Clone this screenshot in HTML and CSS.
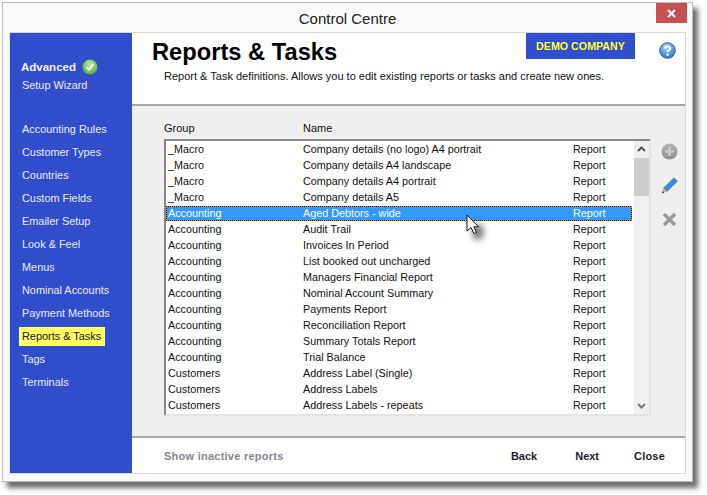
FILE: index.html
```html
<!DOCTYPE html>
<html lang="en">
<head>
<meta charset="utf-8">
<title>Control Centre</title>
<link rel="stylesheet" href="styles.css">
</head>
<body>
<div class="window">
  <div class="titlebar">
    <div class="title">Control Centre</div>
    <div class="close-x"><svg width="11" height="11" viewBox="0 0 11 11"><path d="M2 2L9 9M9 2L2 9" stroke="#fff" stroke-width="2" fill="none"/></svg></div>
  </div>
  <div class="frame">
    <nav class="sidebar">
      <div class="adv"><b>Advanced</b><svg class="tick" width="16" height="16" viewBox="0 0 16 16"><defs><radialGradient id="g" cx="50%" cy="35%" r="65%"><stop offset="0" stop-color="#c4eda2"/><stop offset="1" stop-color="#4fae3c"/></radialGradient></defs><circle cx="8" cy="8" r="7.5" fill="url(#g)"/><path d="M4.5 8.2L7 10.8L11.5 5" stroke="#fff" stroke-width="1.8" fill="none"/></svg></div>
      <div class="nav wizard">Setup Wizard</div>
      <div class="navlist">
        <div class="nav">Accounting Rules</div>
        <div class="nav">Customer Types</div>
        <div class="nav">Countries</div>
        <div class="nav">Custom Fields</div>
        <div class="nav">Emailer Setup</div>
        <div class="nav">Look &amp; Feel</div>
        <div class="nav">Menus</div>
        <div class="nav">Nominal Accounts</div>
        <div class="nav">Payment Methods</div>
        <div class="nav active">Reports &amp; Tasks</div>
        <div class="nav">Tags</div>
        <div class="nav">Terminals</div>
      </div>
    </nav>
    <main class="main">
      <header class="head">
        <div class="head-text">
          <h1>Reports &amp; Tasks</h1>
          <p>Report &amp; Task definitions. Allows you to edit existing reports or tasks and create new ones.</p>
        </div>
        <div class="demo">DEMO COMPANY</div>
        <svg class="help" width="17" height="17" viewBox="0 0 17 17"><defs><radialGradient id="h" cx="45%" cy="30%" r="75%"><stop offset="0" stop-color="#a9d6f5"/><stop offset="1" stop-color="#2472c0"/></radialGradient></defs><circle cx="8.5" cy="8.5" r="7.8" fill="url(#h)" stroke="#2a5f9f"/><path d="M5.8 6.4C5.8 3.8 11.2 3.8 11.2 6.4C11.2 8.2 8.6 8.2 8.6 10.2" stroke="#fff" stroke-width="2" fill="none"/><rect x="7.5" y="11.5" width="2.2" height="2.2" fill="#fff"/></svg>
      </header>
      <section class="body">
        <div class="cols"><span class="h1col">Group</span><span>Name</span></div>
        <div class="listrow">
          <div class="list">
            <div class="rows">
              <div class="row"><span class="c1">_Macro</span><span class="c2">Company details (no logo) A4 portrait</span><span>Report</span></div>
              <div class="row"><span class="c1">_Macro</span><span class="c2">Company details A4 landscape</span><span>Report</span></div>
              <div class="row"><span class="c1">_Macro</span><span class="c2">Company details A4 portrait</span><span>Report</span></div>
              <div class="row"><span class="c1">_Macro</span><span class="c2">Company details A5</span><span>Report</span></div>
              <div class="row sel"><span class="c1">Accounting</span><span class="c2">Aged Debtors - wide</span><span>Report</span></div>
              <div class="row"><span class="c1">Accounting</span><span class="c2">Audit Trail</span><span>Report</span></div>
              <div class="row"><span class="c1">Accounting</span><span class="c2">Invoices In Period</span><span>Report</span></div>
              <div class="row"><span class="c1">Accounting</span><span class="c2">List booked out uncharged</span><span>Report</span></div>
              <div class="row"><span class="c1">Accounting</span><span class="c2">Managers Financial Report</span><span>Report</span></div>
              <div class="row"><span class="c1">Accounting</span><span class="c2">Nominal Account Summary</span><span>Report</span></div>
              <div class="row"><span class="c1">Accounting</span><span class="c2">Payments Report</span><span>Report</span></div>
              <div class="row"><span class="c1">Accounting</span><span class="c2">Reconciliation Report</span><span>Report</span></div>
              <div class="row"><span class="c1">Accounting</span><span class="c2">Summary Totals Report</span><span>Report</span></div>
              <div class="row"><span class="c1">Accounting</span><span class="c2">Trial Balance</span><span>Report</span></div>
              <div class="row"><span class="c1">Customers</span><span class="c2">Address Label (Single)</span><span>Report</span></div>
              <div class="row"><span class="c1">Customers</span><span class="c2">Address Labels</span><span>Report</span></div>
              <div class="row"><span class="c1">Customers</span><span class="c2">Address Labels - repeats</span><span>Report</span></div>
            </div>
            <div class="scroll">
              <svg class="arrow" width="15" height="17" viewBox="0 0 15 17"><path d="M4 10L7.5 6.5L11 10" stroke="#555" stroke-width="2" fill="none"/></svg>
              <div class="thumb"></div>
              <div class="track"></div>
              <svg class="arrow" width="15" height="17" viewBox="0 0 15 17"><path d="M4 7L7.5 10.5L11 7" stroke="#777" stroke-width="2" fill="none"/></svg>
            </div>
          </div>
          <div class="tools">
            <svg width="17" height="17" viewBox="0 0 17 17"><defs><linearGradient id="p" x1="0" y1="0" x2="0" y2="1"><stop offset="0" stop-color="#b4b4b4"/><stop offset="1" stop-color="#8e8e8e"/></linearGradient></defs><circle cx="8.5" cy="8.5" r="8" fill="url(#p)"/><path d="M8.5 4V13M4 8.5H13" stroke="#c9c9c9" stroke-width="2.6"/></svg>
            <svg width="17" height="17" viewBox="0 0 17 17"><path d="M13 .8L16.4 4.2L6 14.4L2.4 11.2Z" fill="#3a8fd8" stroke="#2a6cb0" stroke-width=".6"/><path d="M2.4 11.2L6 14.4L.8 16.4Z" fill="#e8b060"/><path d="M.8 16.4L1.8 14L3.2 15.4Z" fill="#333"/></svg>
            <svg width="17" height="17" viewBox="0 0 17 17"><path d="M3 3L14 14M14 3L3 14" stroke="#9a9a9a" stroke-width="3.6"/></svg>
          </div>
        </div>
      </section>
      <footer class="foot">
        <span class="inactive">Show inactive reports</span>
        <span class="btn back">Back</span>
        <span class="btn next">Next</span>
        <span class="btn">Close</span>
      </footer>
    </main>
  </div>
  <svg class="cursor" width="14" height="22" viewBox="0 0 14 22"><defs><filter id="b" x="-100%" y="-100%" width="300%" height="300%"><feGaussianBlur stdDeviation="3"/></filter></defs><ellipse cx="12" cy="18" rx="6" ry="8" fill="#222" opacity=".6" filter="url(#b)"/><path d="M1 1V17L5 13.5L8 19.5L10.5 18.5L7.8 12.8H12.5Z" fill="#fff" stroke="#111" stroke-width="1"/></svg>
</div>
</body>
</html>
```
FILE: styles.css
```css
* { box-sizing: border-box; }
html, body { margin: 0; height: 100%; background: #fff; overflow: hidden; }
body { padding: 2px 0 0 2px; font-family: "Liberation Sans", Arial, sans-serif; font-size: 11px; color: #111; }
.window { position: relative; width: 691px; height: 480px; background: #fafafa; border: 1px solid #bcbcbc; box-shadow: 5px 6px 5px #6f6f6f; padding: 0 6px 7px 6px; display: flex; flex-direction: column; }
.titlebar { height: 29px; flex: none; display: flex; align-items: flex-start; position: relative; }
.title { flex: 1; text-align: center; font-size: 15px; line-height: 15px; padding: 8px 0 0 0; color: #222; }
.close-x { position: absolute; right: -1px; top: 0; width: 31px; height: 20px; background: #c75050; display: flex; align-items: center; justify-content: center; }
.frame { flex: 1; display: flex; border: 1px solid #d8d8d8; border-left-color: #ddd; min-height: 0; }
.sidebar { width: 122px; flex: none; background: #304dcc; color: #fff; padding: 26px 0 0 11px; }
.adv { display: flex; align-items: center; font-size: 11.5px; height: 16px; }
.adv b { font-weight: bold; color: #f2f2ff; }
.tick { margin-left: 6px; }
.nav { height: 19px; line-height: 19px; padding: 0 4px 0 3px; margin-left: -2px; margin-bottom: 4px; width: max-content; color: #e8ecff; font-size: 10.9px; }
.wizard { margin-top: 1px; }
.navlist { margin-top: 25px; }
.nav.active { background: #ffff66; color: #111; }
.main { flex: 1; display: flex; flex-direction: column; background: #fff; min-width: 0; }
.head { height: 73px; flex: none; display: flex; align-items: flex-start; border-bottom: 2px solid #a8a8a8; padding-left: 20px; }
.head-text { flex: 1; min-width: 0; }
h1 { margin: 0; font-size: 23.7px; line-height: 28px; padding-top: 5px; font-weight: bold; color: #000; }
.head p { margin: 4px 0 0 12px; line-height: 13px; white-space: nowrap; width: 0; color: #111; }
.demo { width: 109px; height: 26px; background: #304dcc; color: #ffff33; font-weight: bold; font-size: 10.7px; text-align: center; line-height: 26px; flex: none; }
.help { margin: 9px 9px 0 24px; flex: none; }
.body { flex: 1; background: #efefef; padding: 15px 0 0 32px; min-height: 0; }
.cols { height: 15px; line-height: 15px; display: flex; }
.h1col { width: 139px; flex: none; }
.listrow { display: flex; margin-top: 3px; }
.list { width: 487px; height: 277px; display: flex; background: #fff; border: 2px solid; border-color: #888 #e4e4e4 #e4e4e4 #888; }
.rows { flex: 1; min-width: 0; }
.row { height: 16px; line-height: 16px; display: flex; padding-left: 2px; white-space: nowrap; font-size: 10.8px; }
.c1 { width: 135px; flex: none; }
.c2 { width: 270px; flex: none; }
.sel {
  height: 15px; line-height: 14px; margin-top: 1px; color: #fff;
  background-color: #3399ff;
  background-image:
    repeating-linear-gradient(90deg, #111 0 1px, #f08a10 1px 2px),
    repeating-linear-gradient(90deg, #111 0 1px, #f08a10 1px 2px),
    repeating-linear-gradient(0deg, #111 0 1px, #f08a10 1px 2px),
    repeating-linear-gradient(0deg, #111 0 1px, #f08a10 1px 2px);
  background-size: 100% 1px, 100% 1px, 1px 100%, 1px 100%;
  background-position: 0 0, 0 100%, 0 0, 100% 0;
  background-repeat: no-repeat;
}
.scroll { width: 15px; flex: none; background: #f0f0f0; display: flex; flex-direction: column; margin-left: 2px; }
.arrow { flex: none; }
.thumb { height: 38px; background: #cdcdcd; flex: none; }
.track { flex: 1; }
.tools { display: flex; flex-direction: column; gap: 17px; padding: 4px 0 0 10px; }
.foot { height: 37px; flex: none; background: #fff; border-top: 2px solid #a8a8a8; display: flex; align-items: center; padding-left: 32px; font-weight: bold; }
.inactive { color: #808890; flex: 1; letter-spacing: .25px; }
.btn { color: #1c1c2c; }
.back { margin-right: 38px; }
.next { margin-right: 35px; }
.foot .btn:last-child { margin-right: 20px; letter-spacing: .2px; }
.cursor { position: absolute; left: 463px; top: 211px; overflow: visible; }
```
